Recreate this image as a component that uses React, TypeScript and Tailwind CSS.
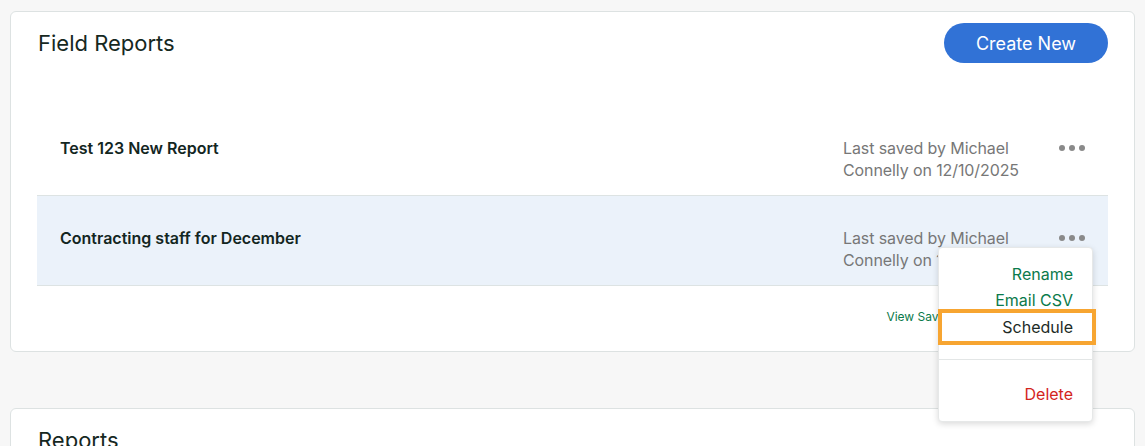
import React from 'react';

const reports = [
  { title: 'Test 123 New Report', savedBy: 'Michael Connelly', date: '12/10/2025', active: false },
  { title: 'Contracting staff for December', savedBy: 'Michael Connelly', date: '12/10/2025', active: true },
];

function Dots() {
  return (
    <button className="flex items-center gap-[4px] h-[22px]">
      <span className="w-[6px] h-[6px] rounded-full bg-[#8a8a8a]" />
      <span className="w-[6px] h-[6px] rounded-full bg-[#8a8a8a]" />
      <span className="w-[6px] h-[6px] rounded-full bg-[#8a8a8a]" />
    </button>
  );
}

function ActionMenu() {
  return (
    <div className="absolute left-[927px] top-[235px] w-[155px] bg-white rounded-[4px] border border-[#e6e8e8] shadow-[0_2px_6px_rgba(0,0,0,0.15)] z-10 text-right text-[16px] leading-[26px]">
      <div className="pt-[13px] pr-[19px]">
        <p className="text-[#0b7a4b]">Rename</p>
        <p className="text-[#0b7a4b]">Email CSV</p>
      </div>
      <div className="relative pr-[19px] mt-[1px]">
        <p className="text-[#1d2b26]">Schedule</p>
        <span className="absolute -left-px -right-[4px] -top-[5px] -bottom-[5px] border-4 border-[#f7a531]" />
      </div>
      <div className="mt-[19px] border-t border-[#e3e6e6]" />
      <div className="pt-[21px] pb-[14px] pr-[19px]">
        <p className="text-[#d3241d]">Delete</p>
      </div>
    </div>
  );
}

function ReportRow({ title, savedBy, date, active }: { title: string; savedBy: string; date: string; active: boolean }) {
  const [first, last] = savedBy.split(' ');
  return (
    <div className={`flex pl-[23px] pr-[23px] pt-[31px] pb-[14px] border-b border-[#dde3e3] ${active ? 'bg-[#ebf2fa]' : ''}`}>
      <p className="flex-1 text-[16px] leading-[22px] font-semibold text-[#13261f]">{title}</p>
      <div className="w-[216px] text-[16px] leading-[22px] text-[#777777] tracking-[-0.1px]">
        <p>Last saved by {first}</p>
        <p>{last} on {date}</p>
      </div>
      <Dots />
    </div>
  );
}

export default function App() {
  return (
    <div className="min-h-screen bg-[#f7f7f7] pt-[11px] px-[10px] font-['Inter',sans-serif] overflow-hidden">
      <div className="relative bg-white border border-[#dde2e2] rounded-[6px] pt-[11px] pb-[26px] px-[26px]">
        <div className="flex items-center justify-between h-[40px]">
          <h2 className="pl-[1px] text-[22px] text-[#16281f]">Field Reports</h2>
          <button className="h-[40px] w-[164px] rounded-full bg-[#3172d6] text-white text-[18px]">Create New</button>
        </div>
        <div className="mt-[43px]">
          {reports.map((r) => (
            <ReportRow key={r.title} {...r} />
          ))}
        </div>
        <div className="mt-[23px] flex justify-end pr-[108px]">
          <a className="text-[12px] leading-[16px] text-[#0b7a4b]">View Saved Reports</a>
        </div>
        <ActionMenu />
      </div>

      <div className="mt-[56px] bg-white border border-[#dde2e2] rounded-[6px] pt-[11px] px-[26px] h-[200px]">
        <div className="flex items-center h-[40px]">
          <h2 className="pl-[1px] text-[22px] text-[#16281f]">Reports</h2>
        </div>
      </div>
    </div>
  );
}
